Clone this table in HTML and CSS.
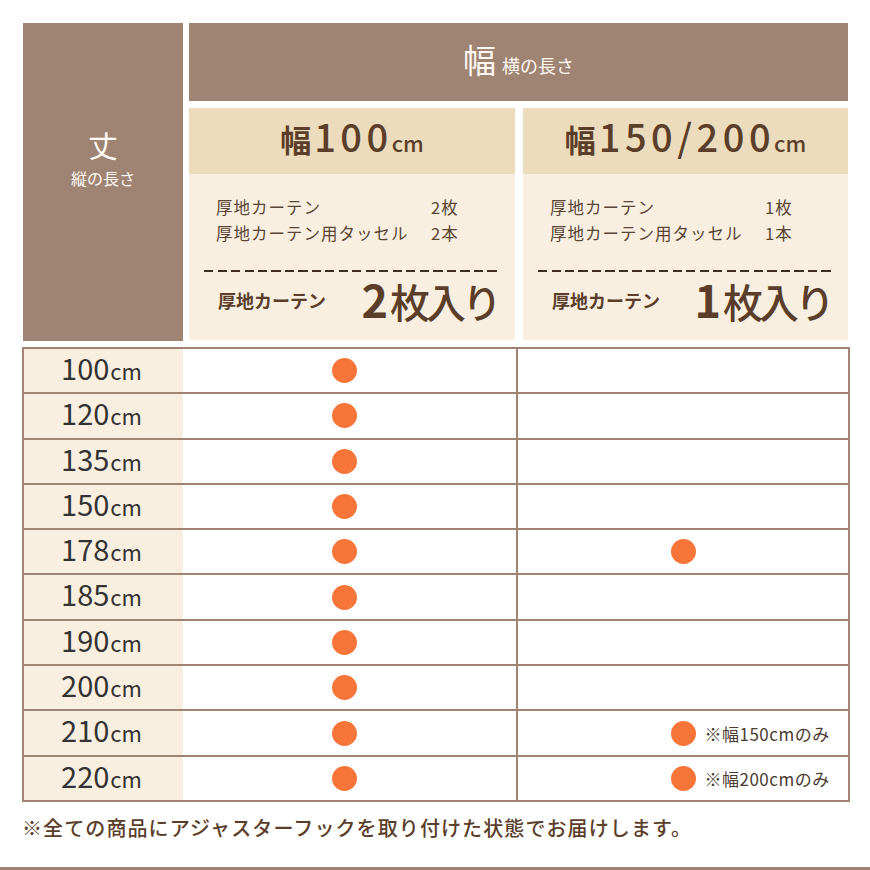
FILE: index.html
```html
<!DOCTYPE html>
<html lang="ja">
<head>
<meta charset="utf-8">
<link rel="stylesheet" href="styles.css">
</head>
<body>
<div class="page">
  <div class="head">
    <div class="side-head">
      <div class="side-title">丈</div>
      <div class="side-sub">縦の長さ</div>
    </div>
    <div class="main-head">
      <div class="width-head"><span class="wh-big">幅</span><span class="wh-small">横の長さ</span></div>
      <div class="opt">
        <div class="opt-title">幅<span class="num">100</span><span class="cm">cm</span></div>
        <div class="opt-body">
          <div class="items">
            <span>厚地カーテン</span><span>2枚</span>
            <span>厚地カーテン用タッセル</span><span>2本</span>
          </div>
          <div class="dash"></div>
          <div class="total">
            <span class="total-label">厚地カーテン</span>
            <span class="total-big"><span class="tnum">2</span>枚入り</span>
          </div>
        </div>
      </div>
      <div class="opt">
        <div class="opt-title">幅<span class="num">150/200</span><span class="cm">cm</span></div>
        <div class="opt-body">
          <div class="items">
            <span>厚地カーテン</span><span>1枚</span>
            <span>厚地カーテン用タッセル</span><span>1本</span>
          </div>
          <div class="dash"></div>
          <div class="total">
            <span class="total-label">厚地カーテン</span>
            <span class="total-big"><span class="tnum">1</span>枚入り</span>
          </div>
        </div>
      </div>
    </div>
  </div>

  <div class="table">
    <div class="row"><div class="label">100<span class="u">cm</span></div><div class="c1"><span class="dot"></span></div><div class="c2"></div></div>
    <div class="row"><div class="label">120<span class="u">cm</span></div><div class="c1"><span class="dot"></span></div><div class="c2"></div></div>
    <div class="row"><div class="label">135<span class="u">cm</span></div><div class="c1"><span class="dot"></span></div><div class="c2"></div></div>
    <div class="row"><div class="label">150<span class="u">cm</span></div><div class="c1"><span class="dot"></span></div><div class="c2"></div></div>
    <div class="row"><div class="label">178<span class="u">cm</span></div><div class="c1"><span class="dot"></span></div><div class="c2"><span class="dot"></span></div></div>
    <div class="row"><div class="label">185<span class="u">cm</span></div><div class="c1"><span class="dot"></span></div><div class="c2"></div></div>
    <div class="row"><div class="label">190<span class="u">cm</span></div><div class="c1"><span class="dot"></span></div><div class="c2"></div></div>
    <div class="row"><div class="label">200<span class="u">cm</span></div><div class="c1"><span class="dot"></span></div><div class="c2"></div></div>
    <div class="row"><div class="label">210<span class="u">cm</span></div><div class="c1"><span class="dot"></span></div><div class="c2"><span class="dot"></span><span class="note">※幅150cmのみ</span></div></div>
    <div class="row"><div class="label">220<span class="u">cm</span></div><div class="c1"><span class="dot"></span></div><div class="c2"><span class="dot"></span><span class="note">※幅200cmのみ</span></div></div>
  </div>

  <p class="foot">※全ての商品にアジャスターフックを取り付けた状態でお届けします。</p>
</div>
<div class="rule"></div>
</body>
</html>
```

FILE: styles.css
```css
html, body {
  margin: 0;
  padding: 0;
  background: #ffffff;
}
body {
  width: 870px;
  height: 870px;
  overflow: hidden;
  font-family: "Noto Sans CJK JP", "Noto Sans", sans-serif;
  color: #5b3e29;
}
.page {
  padding: 23px 0 0 22px;
}
.head {
  margin-left: 1px;
  width: 825px;
  display: grid;
  grid-template-columns: 160px 659px;
  column-gap: 6px;
  height: 318px;
}
.side-head {
  background: #a08473;
  color: #fff8f2;
  display: flex;
  flex-direction: column;
  align-items: center;
  padding-top: 103px;
  box-sizing: border-box;
}
.side-title {
  font-size: 30px;
  line-height: 36px;
}
.side-sub {
  font-size: 16px;
  line-height: 20px;
  margin-top: 6px;
}
.main-head {
  display: grid;
  grid-template-columns: 326px 325px;
  grid-template-rows: 78px 232px;
  column-gap: 8px;
  row-gap: 7px;
}
.width-head {
  grid-column: 1 / 3;
  background: #a08473;
  color: #fff8f2;
  display: flex;
  justify-content: center;
  align-items: baseline;
  padding-top: 14px;
  box-sizing: border-box;
}
.wh-big {
  font-size: 33px;
  line-height: 44px;
}
.wh-small {
  font-size: 18px;
  margin-left: 6px;
}
.opt {
  display: flex;
  flex-direction: column;
  background: #f8efe1;
}
.opt-title {
  height: 66px;
  background: #ecdbbd;
  display: flex;
  justify-content: center;
  align-items: baseline;
  padding-top: 6px;
  box-sizing: border-box;
  font-size: 31px;
  font-weight: 700;
  line-height: 44px;
  color: #5b3e29;
}
.opt-title .num {
  font-size: 38px;
  font-weight: 500;
  letter-spacing: 4.5px;
  margin-left: 3px;
}
.opt-title .cm {
  font-size: 22px;
  font-weight: 500;
  margin-left: -1px;
}
.opt-body {
  padding-top: 20px;
}
.items {
  display: grid;
  grid-template-columns: 215px auto;
  padding-left: 27px;
  font-size: 16.5px;
  line-height: 26px;
  letter-spacing: 1px;
  color: #5a4434;
}
.dash {
  margin: 24px 15px 0 15px;
  height: 2px;
  background: repeating-linear-gradient(90deg, #3d2d22 0 9px, transparent 9px 13.5px);
}
.total {
  height: 56px;
  display: flex;
  justify-content: space-between;
  align-items: center;
  padding: 0 17px 0 29px;
}
.total-label {
  font-size: 18px;
  font-weight: 700;
  color: #5b3e29;
}
.total-big {
  font-size: 40px;
  font-weight: 500;
  letter-spacing: -4px;
  line-height: 50px;
  color: #5b3e29;
}
.total-big .tnum {
  font-size: 45px;
  font-weight: 700;
  letter-spacing: 0;
  margin-right: 2px;
}

.table {
  margin-top: 6px;
  width: 828px;
  box-sizing: border-box;
  border: 2px solid #a08473;
}
.row {
  display: flex;
  height: 43.3px;
  border-bottom: 2px solid #a08473;
}
.row:last-child {
  border-bottom: none;
}
.label {
  width: 159px;
  background: #f8efe1;
  display: flex;
  justify-content: center;
  align-items: baseline;
  padding-top: 1px;
  padding-right: 4px;
  box-sizing: border-box;
  font-size: 29px;
  line-height: 34px;
  font-weight: 400;
  color: #333333;
}
.label .u {
  font-size: 22px;
  margin-left: 1px;
}
.c1 {
  width: 335px;
  border-right: 2px solid #a08473;
  display: flex;
  justify-content: center;
  align-items: center;
  padding-right: 11px;
  box-sizing: border-box;
}
.c2 {
  flex: 1;
  display: grid;
  grid-template-columns: 1fr 25px 1fr;
  align-items: center;
}
.c2 .dot {
  grid-column: 2;
}
.dot {
  width: 25px;
  height: 25px;
  border-radius: 50%;
  background: #f77538;
}
.note {
  grid-column: 3;
  margin-left: 9px;
  font-size: 17px;
  letter-spacing: 0.5px;
  color: #4a3a30;
  white-space: nowrap;
}
.foot {
  margin: 12px 0 0 0;
  font-size: 20px;
  line-height: 28px;
  letter-spacing: 1.1px;
  font-weight: 500;
  color: #5b3e29;
}
.rule {
  margin-top: 25px;
  height: 3px;
  background: #a08473;
}
```
